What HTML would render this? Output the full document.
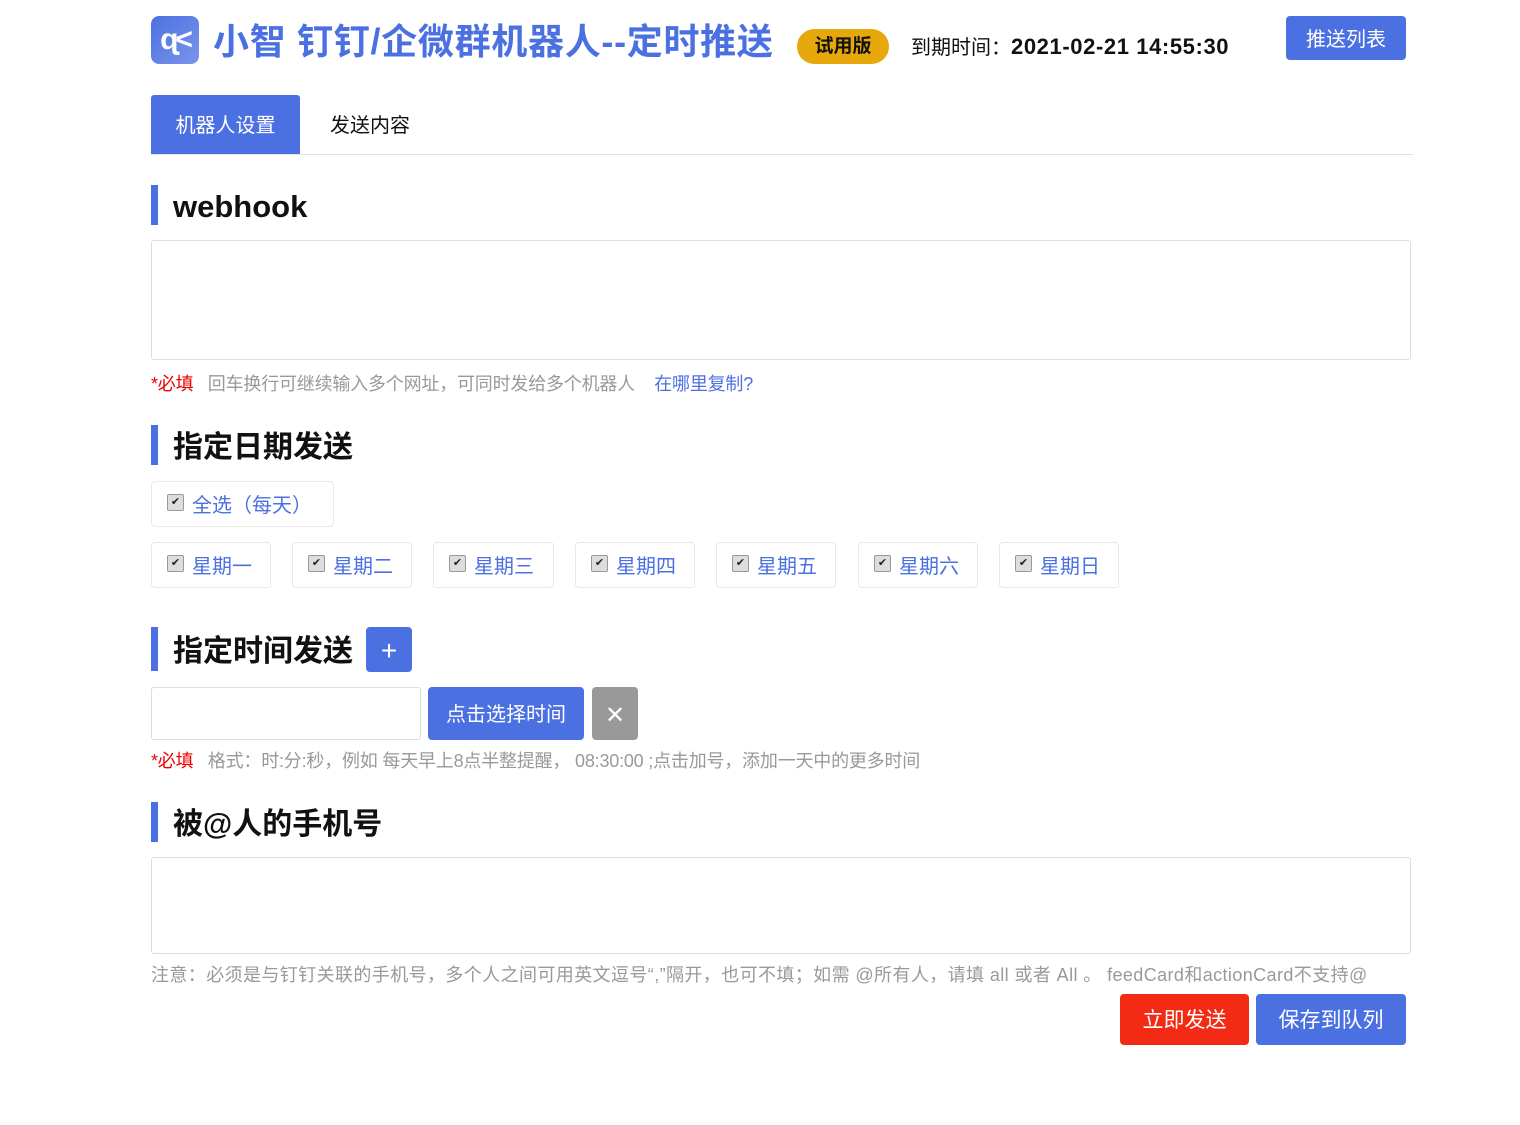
<!DOCTYPE html>
<html><head><meta charset="utf-8"><style>
*{margin:0;padding:0;box-sizing:border-box}
body{width:1520px;height:1125px;background:#fff;font-family:"Liberation Sans","Noto Sans CJK SC",sans-serif;position:relative;overflow:hidden;color:#222}
.a{position:absolute;white-space:nowrap}
.blue{background:#4b70e2;color:#fff;border-radius:4px;text-align:center}
.bar{position:absolute;left:151px;width:7px;background:#4b70e2}
.h{position:absolute;left:173px;font-size:30px;font-weight:bold;color:#111;line-height:40px}
.ta{position:absolute;left:151px;width:1260px;border:1px solid #ddd;border-radius:3px}
.hint{position:absolute;font-size:18px;color:#999;line-height:20px;white-space:nowrap;letter-spacing:-0.2px}
.cb{position:absolute;height:46px;border:1px solid #e8e8e8;border-radius:4px;font-size:20px;color:#4b70e2;line-height:48px;padding-left:40px}
.cb:before{content:"✔";position:absolute;left:15px;top:12px;width:15px;height:15px;border:1px solid #999;border-radius:2px;background:#ddd;font-size:11px;line-height:14px;text-align:center;color:#222}
</style></head><body>
<div class="a" style="left:151px;top:16px;width:48px;height:48px;border-radius:8px;background:linear-gradient(135deg,#4b70e2,#7b95ea);color:#fff;font-weight:bold;font-size:30px;line-height:48px;text-align:center;letter-spacing:-3px">ɋ&lt;</div>
<div class="a" style="left:213px;top:19px;font-size:36px;font-weight:bold;color:#4b70e2;line-height:46px;letter-spacing:0.7px">小智 钉钉/企微群机器人--定时推送</div>
<div class="a" style="left:797px;top:29px;width:92px;height:35px;border-radius:18px;background:#e6a80a;font-size:19px;font-weight:bold;line-height:36px;text-align:center;color:#111">试用版</div>
<div class="a" style="left:911px;top:34px;font-size:20px;line-height:26px;color:#111">到期时间：<b style="font-size:22px;letter-spacing:0.6px">2021-02-21 14:55:30</b></div>
<div class="a blue" style="left:1286px;top:16px;width:120px;height:44px;font-size:20px;line-height:48px">推送列表</div>
<div class="a" style="left:151px;top:95px;width:149px;height:59px;background:#4b70e2;color:#fff;font-size:20px;line-height:62px;text-align:center;border-radius:3px 3px 0 0">机器人设置</div>
<div class="a" style="left:330px;top:95px;font-size:20px;line-height:62px;color:#111">发送内容</div>
<div class="a" style="left:151px;top:154px;width:1262px;height:1px;background:#e3e3e3"></div>

<div class="bar" style="top:185px;height:40px"></div><div class="h" style="top:187px;font-size:31px">webhook</div>
<div class="ta" style="top:240px;height:120px"></div>
<div class="hint" style="left:151px;top:374px"><span style="color:#e00">*必填</span>&nbsp;&nbsp; 回车换行可继续输入多个网址，可同时发给多个机器人 &nbsp;&nbsp;&nbsp;<span style="color:#4b70e2">在哪里复制?</span></div>

<div class="bar" style="top:425px;height:40px"></div><div class="h" style="top:428px">指定日期发送</div>
<div class="cb" style="left:151px;top:481px;width:183px">全选（每天）</div>
<div class="cb" style="left:151px;top:542px;width:120px">星期一</div>
<div class="cb" style="left:292px;top:542px;width:120px">星期二</div>
<div class="cb" style="left:433px;top:542px;width:121px">星期三</div>
<div class="cb" style="left:575px;top:542px;width:120px">星期四</div>
<div class="cb" style="left:716px;top:542px;width:120px">星期五</div>
<div class="cb" style="left:858px;top:542px;width:120px">星期六</div>
<div class="cb" style="left:999px;top:542px;width:120px">星期日</div>

<div class="bar" style="top:627px;height:44px"></div><div class="h" style="top:632px">指定时间发送</div>
<div class="a blue" style="left:366px;top:627px;width:46px;height:45px;font-size:28px;line-height:47px">+</div>
<div class="a" style="left:151px;top:687px;width:270px;height:53px;border:1px solid #ddd;border-radius:3px"></div>
<div class="a blue" style="left:428px;top:687px;width:156px;height:53px;font-size:20px;line-height:56px">点击选择时间</div>
<div class="a" style="left:592px;top:687px;width:46px;height:53px;background:#999;border-radius:4px;color:#fff;font-size:24px;line-height:58px;text-align:center">✕</div>
<div class="hint" style="left:151px;top:751px"><span style="color:#e00">*必填</span>&nbsp;&nbsp; 格式：时:分:秒，例如 每天早上8点半整提醒， 08:30:00 ;点击加号，添加一天中的更多时间</div>

<div class="bar" style="top:802px;height:40px"></div><div class="h" style="top:805px">被@人的手机号</div>
<div class="ta" style="top:857px;height:97px"></div>
<div class="hint" style="left:151px;top:965px;letter-spacing:0.4px">注意：必须是与钉钉关联的手机号，多个人之间可用英文逗号“,”隔开，也可不填；如需 @所有人，请填 all 或者 All 。 feedCard和actionCard不支持@</div>
<div class="a" style="left:1120px;top:994px;width:129px;height:51px;background:#f32a14;color:#fff;border-radius:4px;font-size:21px;line-height:54px;text-align:center">立即发送</div>
<div class="a blue" style="left:1256px;top:994px;width:150px;height:51px;font-size:21px;line-height:54px">保存到队列</div>
</body></html>
